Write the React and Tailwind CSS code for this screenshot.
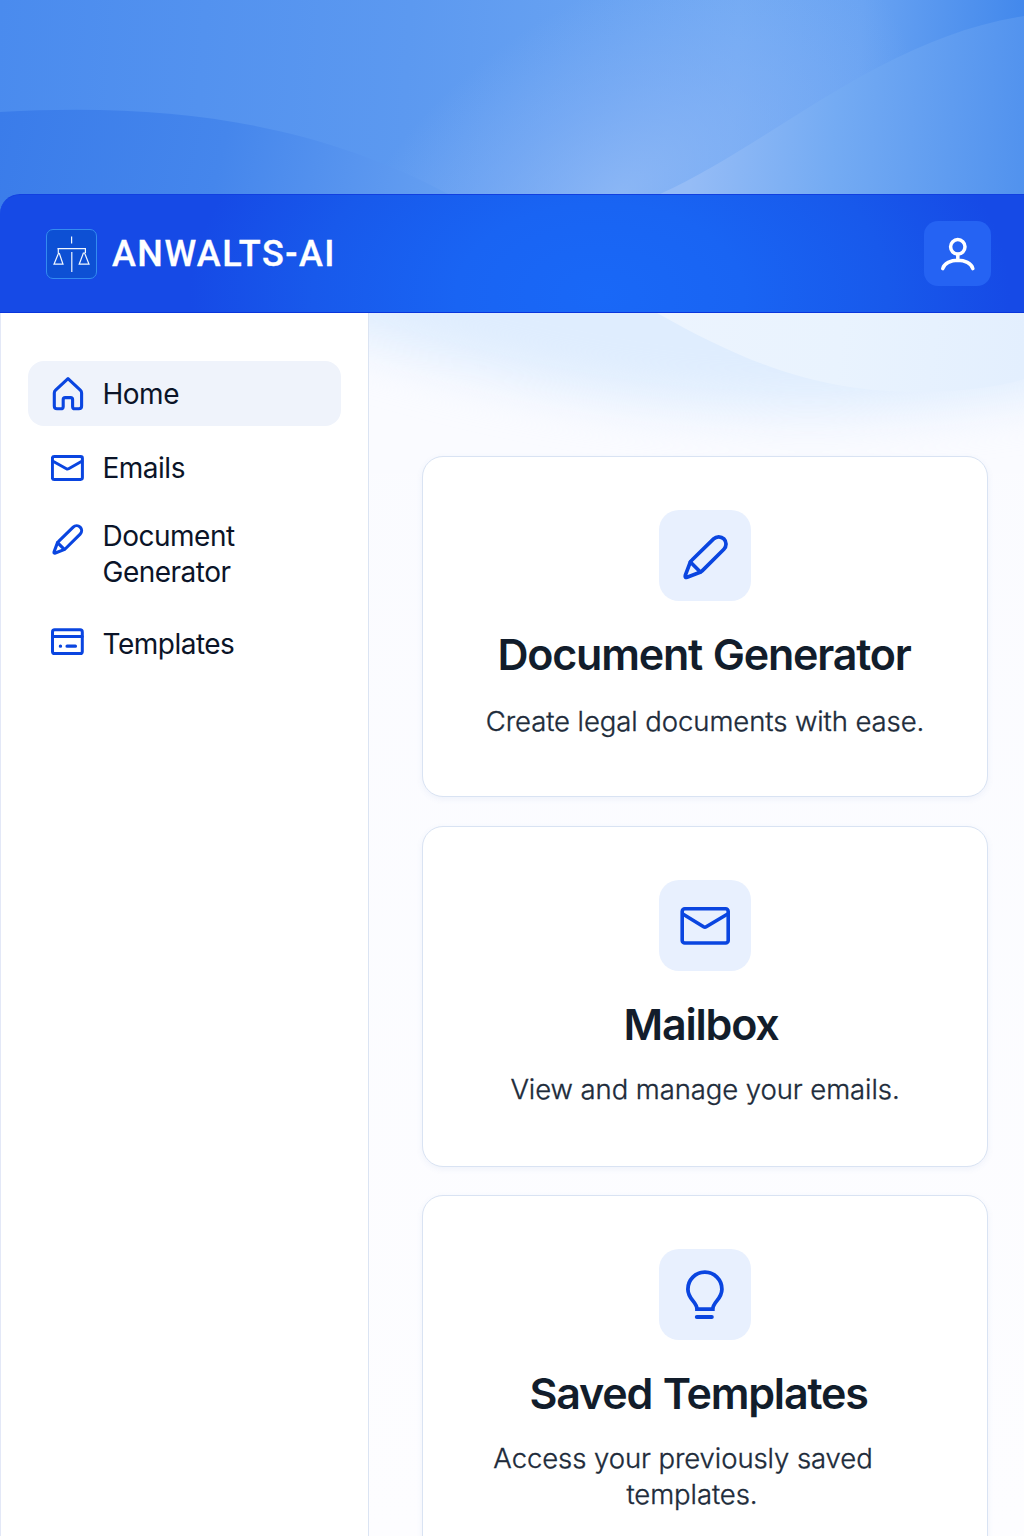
import React from "react";

const HomeIcon = () => (
  <svg width="34" height="36" viewBox="51 376 34 36" fill="none" stroke="#0a45e0" strokeWidth="3.1" strokeLinejoin="round" strokeLinecap="round">
    <path d="M68 378.6 L55.6 390.2 Q54.3 391.4 54.3 393 V406 Q54.3 408.8 57 408.8 H60.6 Q63.2 408.8 63.2 406.4 V399.6 Q63.2 397.6 65.2 397.6 H70.6 Q72.6 397.6 72.6 399.6 V406.4 Q72.6 408.8 75 408.8 H78.8 Q81.6 408.8 81.6 406 V393 Q81.6 391.4 80.3 390.2 Z" />
  </svg>
);

const MailIcon = () => (
  <svg width="34" height="28" viewBox="50.8 454 34 28" fill="none" stroke="#0a45e0" strokeWidth="3" strokeLinejoin="round" strokeLinecap="round">
    <rect x="52.2" y="456.6" width="30" height="22.8" rx="1.8" />
    <path d="M52.8 461.3 L66.2 468.7 Q67.3 469.3 68.4 468.7 L81.6 461.3" />
  </svg>
);

const PencilPaths = () => (
  <>
    <path d="M692.2 560 L713.8 538.9 A6.9 6.9 0 0 1 724.1 549.2 L702.6 570.6 Q701.6 571.6 700.3 572.2 L687.3 577.3 Q684.9 578 685.5 575.4 L690.3 562.6 Q690.9 561.2 692.2 560 Z" />
    <path d="M690.6 562 L700.6 572" />
  </>
);

const PencilIcon = () => (
  <svg width="32" height="32" viewBox="682.4 532.8 47.4 47.4" fill="none" stroke="#0a45e0" strokeWidth="4.6" strokeLinejoin="round" strokeLinecap="round">
    <PencilPaths />
  </svg>
);

const TemplatesIcon = () => (
  <svg width="34" height="30" viewBox="50.8 627 34 30" fill="none" stroke="#0a45e0" strokeWidth="3" strokeLinejoin="round" strokeLinecap="round">
    <rect x="52.3" y="629.8" width="29.8" height="23.8" rx="2.2" />
    <path d="M52.5 636.5 H82" />
    <path d="M60.2 646.2 H60.3 M66.9 646.2 H75.2" strokeWidth="3.3" />
  </svg>
);

const BigPencil = () => (
  <svg width="48" height="48" viewBox="681.2 532 48 48" fill="none" stroke="#0a45e0" strokeWidth="3.7" strokeLinejoin="round" strokeLinecap="round">
    <PencilPaths />
  </svg>
);

const BigMail = () => (
  <svg width="52" height="42" viewBox="679.3 904.2 52 42" fill="none" stroke="#0a45e0" strokeWidth="3.6" strokeLinejoin="round" strokeLinecap="round">
    <rect x="682.5" y="909" width="46" height="34.2" rx="2.6" />
    <path d="M683.5 914.5 L703.9 927 Q705.2 927.8 706.5 927 L727.5 914.5" />
  </svg>
);

const BigBulb = () => (
  <svg width="44" height="52" viewBox="683 1269 44 52" fill="none" stroke="#0a45e0" strokeWidth="3.8" strokeLinejoin="miter" strokeLinecap="round">
    <path d="M697 1309.2 C697 1301.8 687.9 1299.4 687.9 1289.2 A17 17 0 0 1 721.9 1289.2 C721.9 1299.4 712.8 1301.8 712.8 1309.2 Z" />
    <path d="M696.8 1317.1 H711.8" strokeWidth="4" />
  </svg>
);

const ScalesIcon = () => (
  <svg width="39" height="38" viewBox="52 235 39 38" fill="none" stroke="#f0f7ff" strokeWidth="1.2">
    <path d="M71.6 236.5 V243.5 M57.5 248.6 H86 M71.8 252 V272" />
    <path d="M58.3 248.6 V253 M58.6 253 L54 264.2 H63 L59.2 253 M85.4 248.6 V253 M83.4 253 L79.2 264.2 H89 L84.6 253 Z" />
  </svg>
);

const UserIcon = () => (
  <svg width="36" height="34" viewBox="940 236 36 34" fill="none" stroke="#ffffff" strokeWidth="3.5" strokeLinecap="round">
    <circle cx="957.8" cy="245.8" r="7.2" />
    <path d="M957.8 253.5 V259.5 M942.8 267.6 C945.4 256.6 970.2 256.6 972.8 267.6" />
  </svg>
);

const Waves = () => (
  <svg className="block h-full w-full" viewBox="0 0 1024 220" preserveAspectRatio="none">
    <defs>
      <linearGradient id="sky" x1="0" y1="0" x2="1024" y2="60" gradientUnits="userSpaceOnUse">
        <stop offset="0" stopColor="#4a8bee" />
        <stop offset="0.4" stopColor="#5c99f0" />
        <stop offset="0.72" stopColor="#71a9f3" />
        <stop offset="0.84" stopColor="#69a3f2" />
        <stop offset="1" stopColor="#4288ec" />
      </linearGradient>
      <radialGradient id="glow" cx="0" cy="0" r="1" gradientUnits="userSpaceOnUse" gradientTransform="translate(620 195) rotate(-35) scale(330 190)">
        <stop offset="0" stopColor="#93bbf6" stopOpacity="0.8" />
        <stop offset="0.5" stopColor="#8bb5f6" stopOpacity="0.42" />
        <stop offset="1" stopColor="#8ab6f6" stopOpacity="0" />
      </radialGradient>
      <linearGradient id="hillLeft" x1="0" y1="110" x2="440" y2="210" gradientUnits="userSpaceOnUse">
        <stop offset="0" stopColor="#3a7cea" />
        <stop offset="0.5" stopColor="#4586ec" />
        <stop offset="1" stopColor="#659ff1" />
      </linearGradient>
      <linearGradient id="hillRight" x1="690" y1="180" x2="1024" y2="200" gradientUnits="userSpaceOnUse">
        <stop offset="0" stopColor="#95bcf6" />
        <stop offset="0.42" stopColor="#74abf3" />
        <stop offset="1" stopColor="#5192ee" />
      </linearGradient>
    </defs>
    <rect width="1024" height="220" fill="url(#sky)" />
    <rect width="1024" height="220" fill="url(#glow)" />
    <path d="M0 112 C180 102 320 126 448 194 L490 220 H0 Z" fill="url(#hillLeft)" />
    <path d="M660 194 C770 145 880 38 1024 16 V220 H620 Z" fill="url(#hillRight)" />
  </svg>
);

const Haze = () => (
  <svg className="block h-full w-full" viewBox="0 0 655 160" preserveAspectRatio="none">
    <defs>
      <filter id="soft" x="-20%" y="-60%" width="140%" height="220%" colorInterpolationFilters="sRGB">
        <feGaussianBlur stdDeviation="36 24" />
      </filter>
      <linearGradient id="hazeCurve" x1="288" y1="0" x2="655" y2="40" gradientUnits="userSpaceOnUse">
        <stop offset="0" stopColor="#ecf4fe" />
        <stop offset="0.5" stopColor="#e9f3fe" />
        <stop offset="1" stopColor="#e3effe" />
      </linearGradient>
    </defs>
    <rect width="655" height="160" fill="#fafbff" />
    <path d="M-120 -80 H760 V60 C620 100 440 106 300 92 C180 80 70 50 -120 -10 Z" fill="#dfedfe" filter="url(#soft)" />
    <path d="M288 0 C370 46 440 77 540 79 C590 79 625 75 655 66 V0 Z" fill="url(#hazeCurve)" />
  </svg>
);

function NavItem({ icon, children, className, iconClass = "" }) {
  return (
    <a className={`flex rounded-2xl pl-[22px] text-[28px] leading-9 tracking-[-0.5px] text-[#0b1428] ${className}`}>
      <span className={`mr-[17.5px] flex w-[35px] shrink-0 justify-center ${iconClass}`}>{icon}</span>
      <span>{children}</span>
    </a>
  );
}

function Card({ icon, title, className = "h-[341px]", titleClass = "", textClass = "mt-[21px]", children }) {
  return (
    <section className={`flex shrink-0 flex-col items-center rounded-[21px] border border-[#d9e3f3] bg-white pt-[53px] text-center shadow-[0_2px_6px_rgba(80,120,190,0.08)] ${className}`}>
      <div className="flex h-[91px] w-[92px] shrink-0 items-center justify-center rounded-[20px] bg-[#e8f0fe]">{icon}</div>
      <h2 className={`mt-[26px] text-[43px] leading-[54px] font-semibold tracking-[-1.2px] whitespace-nowrap text-[#121d2b] [word-spacing:1px] ${titleClass}`}>{title}</h2>
      <div className={`text-[27.5px] leading-9 font-light tracking-[-0.08px] whitespace-nowrap text-[#202b3a] [-webkit-text-stroke:0.35px_#202b3a] ${textClass}`}>{children}</div>
    </section>
  );
}

export default function App() {
  return (
    <div className="relative flex h-[1536px] w-[1024px] flex-col overflow-hidden bg-white font-['Inter',sans-serif]">
      <div className="absolute inset-x-0 top-0 h-[220px]"><Waves /></div>
      <header className="relative mt-[194px] flex h-[119px] shrink-0 items-center justify-between rounded-tl-[20px] border-y border-t-[#123fe0] border-b-[#0a35dc] bg-[radial-gradient(ellipse_410px_260px_at_600px_100px,#1968f7_0%,#1964f3_35%,#1859eb_70%,#164ae6_100%)] pr-[33px] pl-[46px]">
        <div className="flex items-center">
          <div className="flex h-[50px] w-[51px] items-center justify-center rounded-[7px] border border-[#338cf0] bg-[#0d50d4]"><ScalesIcon /></div>
          <span className="ml-[15px] font-['Roboto',sans-serif] text-[36px] leading-none font-medium tracking-[1.5px] text-white [-webkit-text-stroke:0.3px_white]">ANWALTS-AI</span>
        </div>
        <button className="flex h-[65px] w-[67px] items-center justify-center rounded-[14px] bg-[#2563f3]"><UserIcon /></button>
      </header>
      <div className="flex min-h-0 flex-1">
        <aside className="w-[369px] shrink-0 border-x border-r-[#dbe4f3] border-l-[#e3e8f7] bg-white px-[27px] pt-12">
          <nav className="flex flex-col">
            <NavItem icon={<HomeIcon />} className="h-[65px] items-center bg-[#eff3fb]" iconClass="pl-px">Home</NavItem>
            <NavItem icon={<MailIcon />} className="mt-6 h-9 items-center">Emails</NavItem>
            <NavItem icon={<PencilIcon />} className="mt-8 items-start" iconClass="pt-[5px]">Document<br />Generator</NavItem>
            <NavItem icon={<TemplatesIcon />} className="mt-[36px] items-center" iconClass="-mt-1">Templates</NavItem>
          </nav>
        </aside>
        <main className="relative flex flex-1 flex-col bg-linear-to-b from-[#fafbff] to-[#fdfdff]">
          <div className="absolute inset-x-0 top-0 h-40"><Haze /></div>
          <div className="relative mt-[143px] mr-9 ml-[53px] flex flex-col gap-[28.5px]">
            <Card icon={<BigPencil />} title="Document Generator" titleClass="pr-[2px]" textClass="mt-[22px]">
              <p>Create legal documents with ease.</p>
            </Card>
            <Card icon={<BigMail />} title="Mailbox" titleClass="pr-2" textClass="mt-5">
              <p>View and manage your emails.</p>
            </Card>
            <Card icon={<BigBulb />} title="Saved Templates" className="h-[380px]" titleClass="pr-[13px]" textClass="mt-5">
              <p className="pr-11">Access your previously saved</p>
              <p className="pr-[26px]">templates.</p>
            </Card>
          </div>
        </main>
      </div>
    </div>
  );
}
